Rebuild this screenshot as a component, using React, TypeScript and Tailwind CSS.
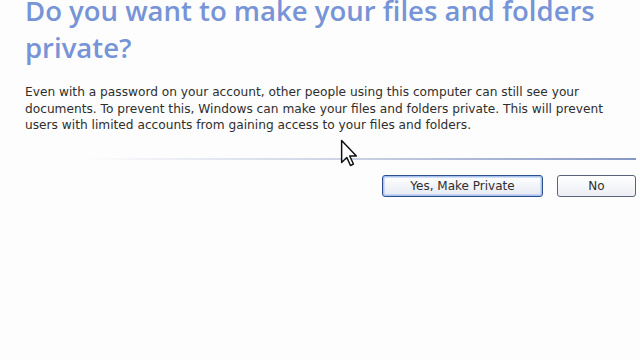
import React from 'react';

const titleFont = { fontFamily: '"Open Sans", "Liberation Sans", Arial, sans-serif' };
const bodyFont = { fontFamily: '"DejaVu Sans", Tahoma, Verdana, sans-serif' };

const Cursor = () => (
  <svg
    width="20"
    height="28"
    viewBox="0 0 12 19"
    className="absolute left-[339px] top-[139px]"
  >
    <path
      d="M1 1 L1 16 L4.5 12.5 L7 18 L9 17 L6.5 11.5 L11 11.5 Z"
      fill="#ffffff"
      stroke="#111111"
      strokeWidth="1"
      strokeLinejoin="round"
    />
  </svg>
);

export default function App() {
  return (
    <div className="relative w-[640px] h-[360px] overflow-hidden bg-[#fdfdfd]">
      <div className="flex flex-col pl-[25px] pr-[4px]">
        <h1
          className="-mt-[8px] text-[27.5px] leading-[37px] font-semibold text-[#7694d6]"
          style={titleFont}
        >
          Do you want to make your files and folders
          <br />
          private?
        </h1>
        <p
          className="mt-[18px] text-[12.2px] leading-[16.5px] text-[#2e2e2e] whitespace-nowrap"
          style={bodyFont}
        >
          Even with a password on your account, other people using this computer can still see your
          <br />
          documents. To prevent this, Windows can make your files and folders private. This will prevent
          <br />
          users with limited accounts from gaining access to your files and folders.
        </p>
        <div className="mt-[24px] ml-[60px] h-[2px] bg-gradient-to-r from-[#fdfdfd] via-[#c9d0e2] to-[#8597c4]" />
        <div className="mt-[15px] flex justify-end gap-[14px]" style={bodyFont}>
          <button className="w-[161px] h-[22px] rounded-[3px] border border-[#2c4f8f] bg-gradient-to-b from-[#ffffff] to-[#e6e9f2] text-[12px] text-[#2e2e2e] shadow-[inset_0_0_0_1.5px_#a9c2ee]">
            Yes, Make Private
          </button>
          <button className="w-[79px] h-[22px] rounded-[3px] border border-[#5a6478] bg-gradient-to-b from-[#ffffff] to-[#eceef3] text-[12px] text-[#2e2e2e]">
            No
          </button>
        </div>
      </div>
      <Cursor />
    </div>
  );
}
